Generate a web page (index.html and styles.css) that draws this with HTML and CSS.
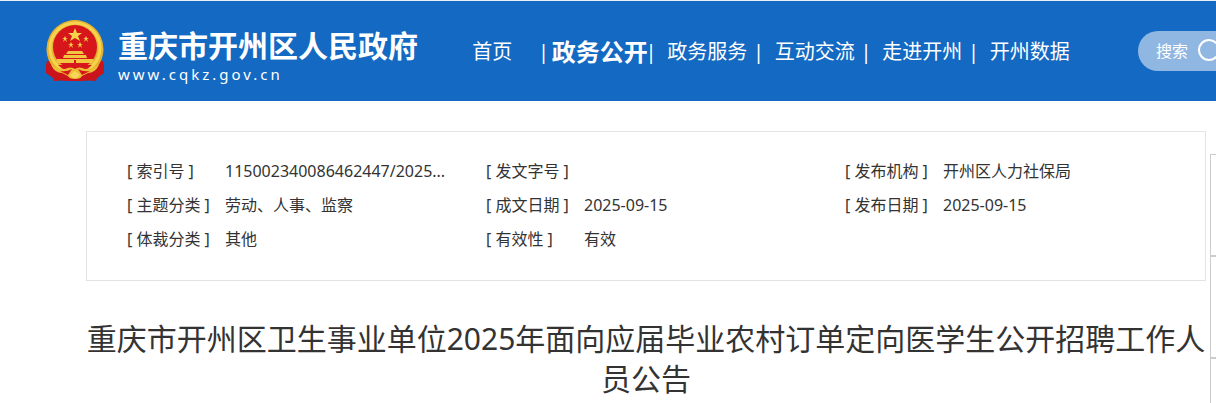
FILE: index.html
```html
<!DOCTYPE html>
<html lang="zh-CN">
<head>
<meta charset="utf-8">
<title>重庆市开州区人民政府</title>
<link rel="stylesheet" href="styles.css">
</head>
<body>
<header class="header">
  <a class="brand" href="#">
    <svg class="emblem" viewBox="0 0 58 62" aria-hidden="true">
      <path fill="#c8141a" d="M1 41q-2 7-1 12l7 5 1 3q8-1 13 0h16q5-1 13 0l1-3 7-5q1-5-1-12z"/>
      <path fill="#e6b030" d="M29 0a29 29 0 0 1 23 46q-4 5-8 5l-8-3H22l-8 3q-4 0-8-5A29 29 0 0 1 29 0"/>
      <circle cx="29" cy="28" r="25" fill="none" stroke="#f6d44e" stroke-width="3"/>
      <circle cx="29" cy="27" r="22" fill="#d7161b"/>
      <path fill="#f6d34a" d="m29 8 2 5h5l-4 3 2 5-5-3-5 3 2-5-4-3h5z"/>
      <path fill="#f3c843" d="m19 16 1 2h2l-2 1 1 3-2-2-2 2 1-3-2-1h2zM40 16l1 2h2l-2 1 1 3-2-2-2 2 1-3-2-1h2zM25 22l1 2h2l-2 1 1 3-2-2-2 2 1-3-2-1h2zM34 22l1 2h2l-2 1 1 3-2-2-2 2 1-3-2-1h2z"/>
      <path fill="#f1c640" d="M22 31h14l2 3H20zM18 35h22l1 3H17zM11 39h36l1 4H10z"/>
      <path fill="#d7161b" d="M28 40h2v3h-2zM12 45h34l-6 5-6-3-5 3-5-3-6 3z"/>
      <path fill="#eebd36" d="M5 45q8 4 14 4 6-3 10 0 4-3 10 0 6 0 14-4-4 8-11 8l-6 3q-1 3-7 3t-7-3l-6-3Q9 53 5 45"/>
      <path fill="#d7161b" d="M14 51q7 1 12-2l-4 6zM44 51q-7 1-12-2l4 6z"/>
      <path fill="#f7d65a" d="m29 51 5 4-3 3h-4l-3-3z"/>
    </svg>
    <span class="brand-text">
      <strong class="brand-name">重庆市开州区人民政府</strong>
      <span class="brand-url">www.cqkz.gov.cn</span>
    </span>
  </a>
  <nav class="nav">
    <div class="nav-item"><a href="#">首页</a><span class="bar">|</span></div>
    <div class="nav-item active"><a href="#">政务公开</a><span class="bar">|</span></div>
    <div class="nav-item"><a href="#">政务服务</a><span class="bar">|</span></div>
    <div class="nav-item"><a href="#">互动交流</a><span class="bar">|</span></div>
    <div class="nav-item"><a href="#">走进开州</a><span class="bar">|</span></div>
    <div class="nav-item"><a href="#">开州数据</a><span class="bar"></span></div>
  </nav>
  <form class="search">
    <input class="search-input" type="text" placeholder="搜索" aria-label="搜索">
    <button class="search-button" type="button" aria-label="提交搜索">
      <svg width="26" height="26" viewBox="0 0 26 26" fill="none" stroke="#fff" stroke-width="2" aria-hidden="true"><circle cx="11" cy="12" r="10"/><path d="m17 19 6 6"/></svg>
    </button>
  </form>
</header>
<main class="article">
  <dl class="info">
    <div class="info-item"><dt>[ 索引号 ]</dt><dd>115002340086462447/2025...</dd></div>
    <div class="info-item"><dt>[ 发文字号 ]</dt><dd></dd></div>
    <div class="info-item"><dt>[ 发布机构 ]</dt><dd>开州区人力社保局</dd></div>
    <div class="info-item"><dt>[ 主题分类 ]</dt><dd>劳动、人事、监察</dd></div>
    <div class="info-item"><dt>[ 成文日期 ]</dt><dd>2025-09-15</dd></div>
    <div class="info-item"><dt>[ 发布日期 ]</dt><dd>2025-09-15</dd></div>
    <div class="info-item"><dt>[ 体裁分类 ]</dt><dd>其他</dd></div>
    <div class="info-item"><dt>[ 有效性 ]</dt><dd>有效</dd></div>
  </dl>
  <h1 class="title">重庆市开州区卫生事业单位2025年面向应届毕业农村订单定向医学生公开招聘工作人员公告</h1>
</main>
<aside class="side-tools">
  <div class="side-tool"></div>
  <div class="side-tool"></div>
  <div class="side-tool"></div>
</aside>
</body>
</html>
```
FILE: styles.css
```css
* {
  box-sizing: border-box;
}

body {
  margin: 0;
  overflow-x: hidden;
  background: #fff;
  color: #333;
  font-family: "Noto Sans", "Noto Sans CJK SC", sans-serif;
  font-size: 16px;
}

a {
  color: inherit;
  text-decoration: none;
}

.header {
  display: flex;
  align-items: center;
  height: 101px;
  padding-left: 46px;
  border-top: 1px solid #e8eef5;
  background: #1469c2;
  color: #fff;
  overflow: hidden;
}

.brand {
  display: flex;
  flex: none;
  gap: 14px;
  width: 393px;
}

.emblem {
  flex: none;
  width: 58px;
  height: 62px;
}

.brand-text {
  display: flex;
  flex-direction: column;
  padding-top: 6px;
}

.brand-name {
  font-size: 30px;
  line-height: 40px;
  white-space: nowrap;
}

.brand-url {
  font-size: 15px;
  line-height: 16px;
  letter-spacing: 3px;
}

.nav {
  display: grid;
  flex: none;
  grid-template-columns: repeat(6, 1fr);
  width: 645px;
  padding-top: 2px;
  font-size: 20px;
  line-height: 40px;
}

.nav-item {
  display: flex;
  padding-left: 5px;
  white-space: nowrap;
}

.nav-item a {
  flex: 1;
  text-align: center;
}

.nav-item.active a {
  font-size: 24px;
  font-weight: 700;
}

.bar {
  display: flex;
  flex: none;
  justify-content: center;
  width: 6px;
}

.search {
  display: flex;
  flex: none;
  align-items: center;
  width: 110px;
  height: 40px;
  margin-left: 54px;
  padding-left: 18px;
  border-radius: 20px;
  background: #90b7e2;
}

.search-input {
  width: 42px;
  padding: 0;
  border: 0;
  outline: 0;
  background: transparent;
  color: #fff;
  font: inherit;
}

.search-input::placeholder {
  color: #fff;
  opacity: 1;
}

.search-button {
  display: flex;
  padding: 0;
  border: 0;
  background: transparent;
}

.article {
  margin: 30px 10px 0 86px;
}

.info {
  display: grid;
  grid-template-columns: repeat(3, 1fr);
  margin: 0;
  padding: 22px 1px 24px 40px;
  border: 1px solid #e3e3e3;
  line-height: 34px;
}

.info-item {
  display: flex;
}

.info-item dt {
  flex: none;
  width: 98px;
}

.info-item dd {
  margin: 0;
}

.title {
  margin: 38px 0 0;
  font-size: 30px;
  font-weight: 400;
  line-height: 40px;
  text-align: center;
}

.side-tools {
  position: fixed;
  top: 154px;
  right: 0;
  width: 6px;
}

.side-tool {
  height: 102px;
  border: 1px solid #ccc;
  border-right: 0;
}
```
